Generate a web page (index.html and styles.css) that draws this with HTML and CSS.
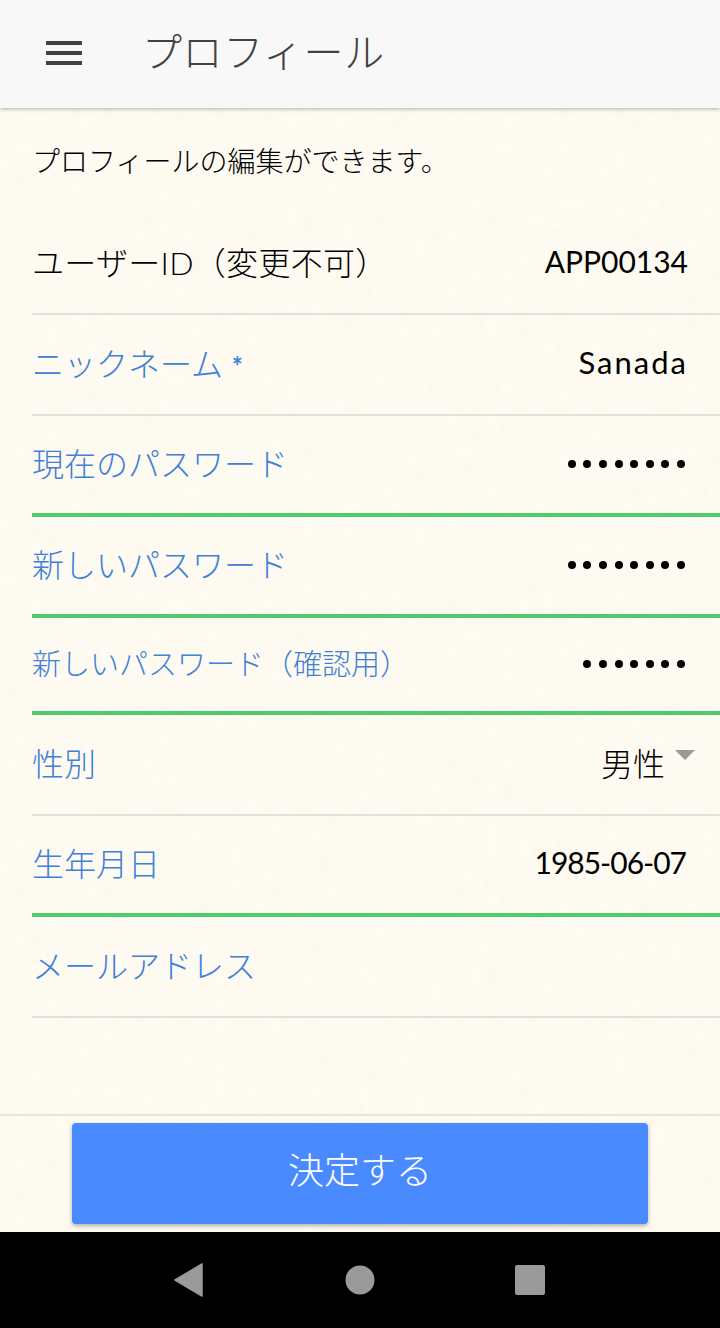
FILE: index.html
```html
<!DOCTYPE html>
<html lang="ja">
  <head>
    <meta name="viewport" content="width=device-width, initial-scale=1" />
    <title>プロフィール</title>
    <link rel="stylesheet" href="styles.css">
  </head>
  <body>
    <div class="screen">
      <header class="toolbar">
        <div class="menu-icon"><span></span><span></span><span></span></div>
        <h1>プロフィール</h1>
      </header>

      <main class="content">
        <p class="intro">プロフィールの編集ができます。</p>

        <div class="row">
          <div class="label label-plain">ユーザーID（変更不可）</div>
          <div class="value">APP00134</div>
        </div>
        <div class="row">
          <div class="label">ニックネーム <span class="req">*</span></div>
          <div class="value value-name">Sanada</div>
        </div>
        <div class="row row-ok">
          <div class="label">現在のパスワード</div>
          <div class="dots"><i></i><i></i><i></i><i></i><i></i><i></i><i></i><i></i></div>
        </div>
        <div class="row row-ok">
          <div class="label">新しいパスワード</div>
          <div class="dots"><i></i><i></i><i></i><i></i><i></i><i></i><i></i><i></i></div>
        </div>
        <div class="row row-ok row-short">
          <div class="label label-small">新しいパスワード（確認用）</div>
          <div class="dots"><i></i><i></i><i></i><i></i><i></i><i></i><i></i></div>
        </div>
        <div class="row">
          <div class="label">性別</div>
          <div class="value value-select">男性<span class="arrow"></span></div>
        </div>
        <div class="row row-ok">
          <div class="label">生年月日</div>
          <div class="value value-date">1985-06-07</div>
        </div>
        <div class="row">
          <div class="label">メールアドレス</div>
        </div>
      </main>

      <footer class="footer">
        <button class="submit">決定する</button>
      </footer>

      <nav class="navbar">
        <svg class="nav-back" width="30" height="34" viewBox="0 0 30 34"><path d="M28 1 V33 L1 17 Z" fill="#9a9a9a" stroke="#9a9a9a" stroke-width="1.5" stroke-linejoin="round"/></svg>
        <svg width="30" height="30" viewBox="0 0 30 30"><circle cx="15" cy="15" r="14.5" fill="#9a9a9a"/></svg>
        <svg width="30" height="30" viewBox="0 0 30 30"><rect width="30" height="30" rx="2" fill="#9a9a9a"/></svg>
      </nav>
    </div>
  </body>
</html>
```

FILE: styles.css
```css
* {
  box-sizing: border-box;
}
body {
  margin: 0;
  font-family: Lato, "Noto Sans CJK JP", sans-serif;
  font-weight: 300;
  color: #000;
}
.screen {
  width: 720px;
  height: 1328px;
  display: flex;
  flex-direction: column;
  background-color: #fefbf3;
  /* watercolor paper grain */
  background-image: url("data:image/svg+xml,%3Csvg xmlns='http://www.w3.org/2000/svg' width='720' height='1328'%3E%3Cfilter id='n'%3E%3CfeTurbulence type='fractalNoise' baseFrequency='0.07' numOctaves='3' seed='4'/%3E%3CfeColorMatrix values='0 0 0 0 0.93 0 0 0 0 0.85 0 0 0 0 0.68 0 0 0 0.35 -0.1'/%3E%3C/filter%3E%3Crect width='720' height='1328' filter='url(%23n)'/%3E%3C/svg%3E");
  overflow: hidden;
}
.toolbar {
  height: 108px;
  flex: none;
  display: flex;
  align-items: center;
  background-color: #f8f8f8;
  box-shadow: 0 1px 4px rgba(0, 0, 0, 0.3);
  position: relative;
}
.menu-icon {
  width: 36px;
  margin-left: 46px;
  margin-bottom: 2px;
  display: flex;
  flex-direction: column;
  gap: 6px;
}
.menu-icon span {
  height: 4px;
  background-color: #424242;
}
.toolbar h1 {
  margin: 0 0 8px 60px;
  font-size: 40px;
  letter-spacing: 0.6px;
  font-weight: 300;
  color: #424242;
}
.content {
  flex: 1;
  padding: 34px 0 0 32px;
}
.intro {
  margin: 0 0 34px 0;
  height: 38px;
  line-height: 38px;
  font-size: 28px;
}
.row {
  height: 101px;
  padding-right: 32px;
  padding-bottom: 6px;
  display: flex;
  align-items: center;
  justify-content: space-between;
  border-bottom: 2px solid #e2e0da;
}
.row-ok {
  border-bottom: 4px solid #50cb6c;
}
.row-short {
  height: 97px;
}
.label {
  font-size: 32px;
  color: #3f80d8;
  white-space: nowrap;
}
.label-plain {
  color: #000;
  letter-spacing: 0.3px;
}
.label-small {
  font-size: 29px;
}
.req {
  font-size: 26px;
  font-weight: 700;
}
.value {
  font-size: 30px;
  font-weight: 400;
  white-space: nowrap;
}
.value-name {
  font-size: 31px;
  letter-spacing: 2px;
}
.value-date {
  letter-spacing: -1px;
  margin-right: 2px;
}
.value-select {
  font-size: 32px;
  font-weight: 300;
  padding-right: 23px;
  position: relative;
}
.arrow {
  position: absolute;
  right: -7px;
  top: 11px;
  border-left: 10px solid transparent;
  border-right: 10px solid transparent;
  border-top: 10px solid #9c9a98;
}
.dots {
  display: flex;
  gap: 7.6px;
  margin-right: 3px;
  margin-top: 5px;
}
.dots i {
  width: 8px;
  height: 8px;
  border-radius: 50%;
  background-color: #000;
}
.footer {
  height: 118px;
  flex: none;
  padding: 7px 72px 0;
  border-top: 2px solid #e8e5dd;
}
.submit {
  display: block;
  width: 100%;
  height: 101px;
  padding: 0 0 12px;
  border: none;
  border-radius: 4px;
  background-color: #4a8aff;
  color: #fff;
  font-family: inherit;
  font-weight: 300;
  font-size: 36px;
  box-shadow: 0 2px 4px rgba(0, 0, 0, 0.3);
}
.navbar {
  height: 96px;
  flex: none;
  background-color: #000;
  display: flex;
  align-items: center;
  justify-content: center;
  gap: 140px;
}
.nav-back {
  margin-left: -1px;
  margin-right: 1px;
}
```
